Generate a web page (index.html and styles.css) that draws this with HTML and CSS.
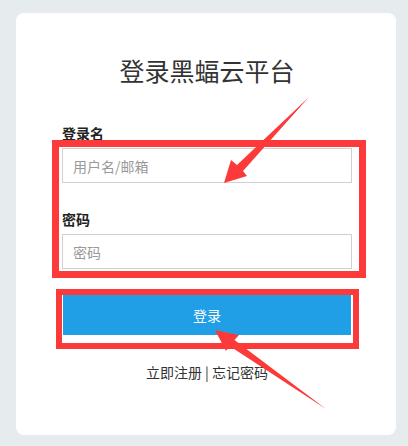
FILE: index.html
```html
<!DOCTYPE html>
<html lang="zh-CN">
<head>
    <meta charset="UTF-8">
    <meta name="viewport" content="width=device-width, initial-scale=1.0">
    <title>登录黑蝠云平台</title>
    <link rel="stylesheet" href="styles.css">
</head>
<body>
    <div class="card">
        <h1>登录黑蝠云平台</h1>

        <form class="login-form">
            <div class="field">
                <label for="username">登录名</label>
                <input type="text" id="username" placeholder="用户名/邮箱">
            </div>
            <div class="field">
                <label for="password">密码</label>
                <input type="password" id="password" placeholder="密码">
            </div>
            <button type="button" class="btn-login">登录</button>
        </form>

        <div class="links">
            <a href="#">立即注册</a> | <a href="#">忘记密码</a>
        </div>
    </div>

    <!-- annotation layer drawn over the screenshot -->
    <div class="mark mark-fields"></div>
    <div class="mark mark-button"></div>
    <svg class="arrows" width="408" height="446" viewBox="0 0 408 446">
        <polygon points="224,183 231,160 237,165 309,97 243,171 247,176"/>
        <polygon points="215,330 239,335 234.5,340 326,409 229.5,346 226,351"/>
    </svg>
</body>
</html>
```

FILE: styles.css
```css
html, body {
    margin: 0;
    height: 100%;
}
body {
    position: relative;
    font-family: "Noto Sans CJK SC", "Liberation Sans", sans-serif;
    background-color: #e6ebee;
    padding: 13px 12px 11px 16px;
    box-sizing: border-box;
}
.card {
    height: 422px;
    background: #fff;
    border-radius: 8px;
    padding: 43px 44px 0 46px;
    box-sizing: border-box;
}
h1 {
    margin: 0 0 38px;
    font-size: 25px;
    line-height: 29px;
    font-weight: normal;
    text-align: center;
    color: #333;
}
.field {
    margin-bottom: 26px;
}
.field label {
    display: block;
    font-size: 14px;
    line-height: 20px;
    font-weight: bold;
    color: #222;
    margin-bottom: 5px;
}
.field input {
    display: block;
    width: 100%;
    height: 35px;
    box-sizing: border-box;
    border: 1px solid #d0d0d0;
    padding: 0 10px;
    font-family: inherit;
    font-size: 14px;
    color: #333;
    outline: none;
}
.field input::placeholder {
    color: #999;
}
.btn-login {
    display: block;
    width: 288px;
    height: 40px;
    margin: 4px 0 0 1px;
    border: none;
    background: #209fe6;
    color: #fff;
    font-family: inherit;
    font-size: 14px;
    cursor: pointer;
}
.links {
    margin-top: 27px;
    text-align: center;
    font-size: 14px;
    line-height: 20px;
    color: #333;
}
.links a {
    color: #333;
    text-decoration: none;
}
.mark {
    position: absolute;
    border: 7px solid #fc3a3a;
    box-sizing: border-box;
}
.mark-fields {
    left: 52px;
    top: 140px;
    width: 314px;
    height: 138px;
}
.mark-button {
    left: 56px;
    top: 289px;
    width: 303px;
    height: 60px;
    border-width: 6px;
}
.arrows {
    position: absolute;
    left: 0;
    top: 0;
    fill: #fc3a3a;
}
```
